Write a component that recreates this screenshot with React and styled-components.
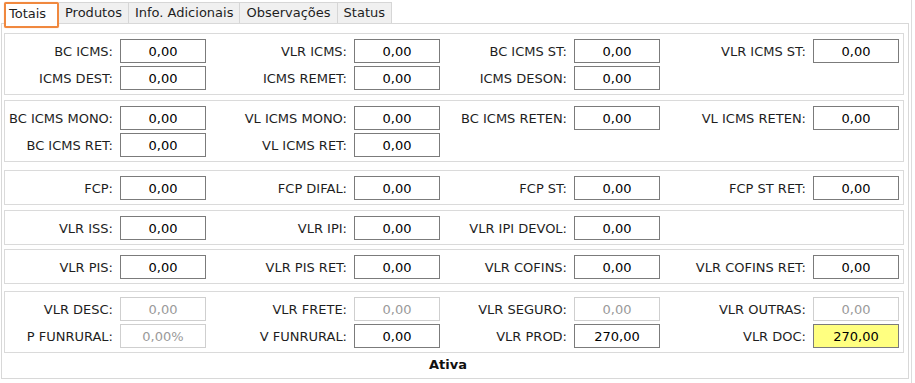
import React from 'react'
import styled, { createGlobalStyle } from 'styled-components'

const Global = createGlobalStyle`
  body {
    margin: 0;
    background: #fff;
    font-family: "DejaVu Sans", Verdana, sans-serif;
    font-size: 13px;
    color: #1e1e1e;
  }
`

const Wrapper = styled.div`
  width: 912px;
  height: 383px;
  padding-left: 1px;
  border-right: 1px solid #dcdcdc;
  box-sizing: border-box;
`

const TabBar = styled.div`
  display: flex;
  align-items: flex-end;
  height: 23px;
  padding-left: 3px;
  position: relative;
  z-index: 2;
`

const Tab = styled.div`
  height: 21px;
  line-height: 20px;
  padding: 0 6px;
  box-sizing: border-box;
  background: #f0f0f0;
  border: 1px solid #d6d6d6;
  border-bottom: none;
  border-left: none;
  white-space: nowrap;
  cursor: pointer;
`

const ActiveTab = styled.div`
  align-self: flex-start;
  margin-top: 2px;
  width: 55px;
  height: 26px;
  margin-bottom: -5px;
  padding-left: 3px;
  line-height: 19px;
  box-sizing: border-box;
  background: #fff;
  border: 2px solid #f0883e;
  border-radius: 2px;
  box-shadow: 0 0 1px #f5b07a;
`

const Panel = styled.div`
  width: 908px;
  height: 356px;
  box-sizing: border-box;
  border: 1px solid #d8d8d8;
  padding: 9px 4px 0 2px;
`

const Section = styled.div`
  width: 900px;
  box-sizing: border-box;
  border: 1px solid #dadada;
  padding: 5px 4px 4px 0;
  margin-bottom: ${p => p.$gap ?? 5}px;
  display: grid;
  grid-template-columns: 115px 86px 148px 86px 134px 86px 153px 86px;
  row-gap: 3px;
  align-items: center;
`

const Label = styled.label`
  text-align: right;
  padding-right: 7px;
  white-space: nowrap;
`

const Field = styled.input`
  width: 86px;
  height: 24px;
  box-sizing: border-box;
  border: 1px solid ${p => (p.disabled ? '#cfcfcf' : '#7b7b7b')};
  background: ${p => (p.$highlight ? '#ffff80' : '#fff')};
  color: ${p => (p.disabled ? '#9a9a9a' : '#000')};
  font-family: "DejaVu Sans", Verdana, sans-serif;
  font-size: 13px;
  text-align: center;
  padding: 0;
  margin: 0;
  outline: none;
`

const Status = styled.div`
  height: 24px;
  line-height: 24px;
  text-align: center;
  font-weight: bold;
  padding-right: 12px;
  color: #111;
`

const sections = [
  {
    gap: 5,
    fields: [
      ['BC ICMS:'], ['VLR ICMS:'], ['BC ICMS ST:'], ['VLR ICMS ST:'],
      ['ICMS DEST:'], ['ICMS REMET:'], ['ICMS DESON:'], null
    ]
  },
  {
    gap: 8,
    fields: [
      ['BC ICMS MONO:'], ['VL ICMS MONO:'], ['BC ICMS RETEN:'], ['VL ICMS RETEN:'],
      ['BC ICMS RET:'], ['VL ICMS RET:'], null, null
    ]
  },
  { gap: 5, fields: [['FCP:'], ['FCP DIFAL:'], ['FCP ST:'], ['FCP ST RET:']] },
  { gap: 4, fields: [['VLR ISS:'], ['VLR IPI:'], ['VLR IPI DEVOL:'], null] },
  { gap: 7, fields: [['VLR PIS:'], ['VLR PIS RET:'], ['VLR COFINS:'], ['VLR COFINS RET:']] },
  {
    gap: 0,
    fields: [
      ['VLR DESC:', '0,00', 'off'], ['VLR FRETE:', '0,00', 'off'], ['VLR SEGURO:', '0,00', 'off'], ['VLR OUTRAS:', '0,00', 'off'],
      ['P FUNRURAL:', '0,00%', 'off'], ['V FUNRURAL:'], ['VLR PROD:', '270,00'], ['VLR DOC:', '270,00', 'hl']
    ]
  }
]

const tabs = ['Produtos', 'Info. Adicionais', 'Observações', 'Status']

export default function App() {
  return (
    <Wrapper>
      <Global />
      <TabBar>
        <ActiveTab>Totais</ActiveTab>
        {tabs.map(t => <Tab key={t}>{t}</Tab>)}
      </TabBar>
      <Panel>
        {sections.map((s, i) => (
          <Section key={i} $gap={s.gap}>
            {s.fields.map((f, j) => f ? (
              <React.Fragment key={j}>
                <Label>{f[0]}</Label>
                <Field
                  readOnly
                  value={f[1] || '0,00'}
                  disabled={f[2] === 'off'}
                  $highlight={f[2] === 'hl'}
                />
              </React.Fragment>
            ) : (
              <React.Fragment key={j}><span /><span /></React.Fragment>
            ))}
          </Section>
        ))}
        <Status>Ativa</Status>
      </Panel>
    </Wrapper>
  )
}
